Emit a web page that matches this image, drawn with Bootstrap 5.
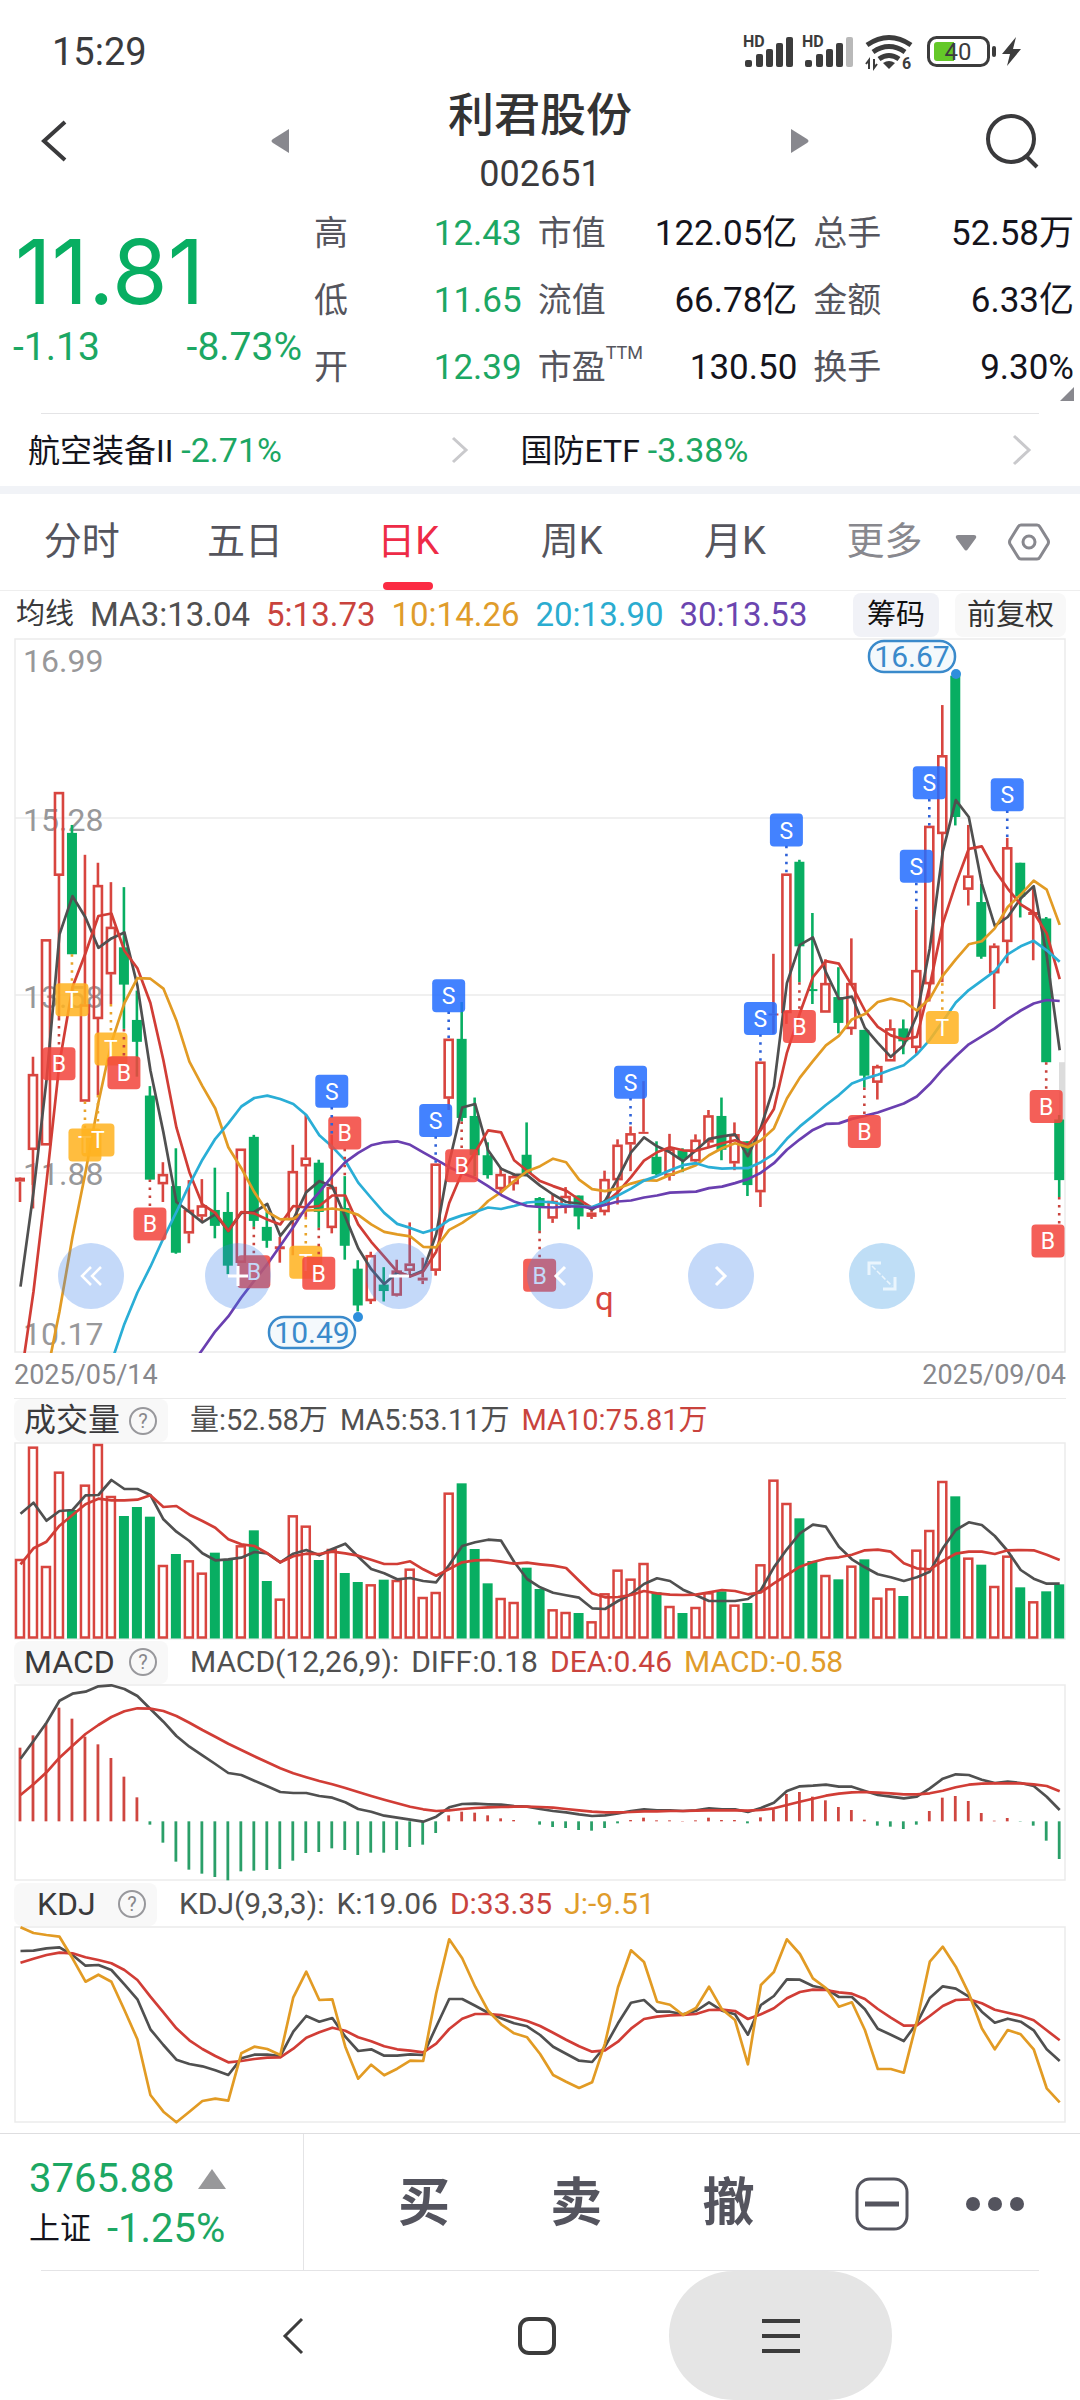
<!DOCTYPE html>
<html lang="zh-CN">
<head>
<meta charset="utf-8">
<meta name="viewport" content="width=device-width, initial-scale=1">
<title>利君股份 002651</title>
<link href="https://cdn.jsdelivr.net/npm/bootstrap@5.3.0/dist/css/bootstrap.min.css" rel="stylesheet">
<style>
:root{--up:#d8453f;--down:#08ae62;--ink:#14141c;--soft:#55555d;--rule:#e4e4e6}
body{font-family:Roboto,"Noto Sans CJK SC",sans-serif;color:#3a3a3c;background:#fff;line-height:1.25}
button{font-family:inherit;color:inherit;border:0;background:none;padding:0}
svg{display:block}
a{text-decoration:none;color:inherit}
.down-text{color:#1ca763}
.status-bar{padding:32px 57px 12px 52px;height:84px;font-size:38px;line-height:40px}
.title-bar{height:110px;padding:4px 40px 0}
.head-btn{width:56px}
.stock-name{font-size:46px;line-height:54px;font-weight:500;color:#333}
.stock-code{font-size:36px;line-height:40px;margin-top:12px}
.step-gap{gap:157px}
.quote-grid{display:grid;grid-template-columns:298px 208fr 260fr 261fr;column-gap:16px;padding:6px 6px 0 0;height:219px}
.price-now{font-family:Inter,Roboto,sans-serif;font-size:90px;line-height:96px;padding:24px 0 0 15px;color:var(--down)}
.price-move{font-size:39px;line-height:54px;padding-left:13px;margin-right:-4px}
.stat-line{height:67px;font-size:35px;color:var(--ink)}
.stat-line span{font-size:34px;color:var(--soft)}
.stat-line sup{font-size:18px;top:-20px}
.corner-mark{right:6px;bottom:12px}
.rule-in{height:1px;background:var(--rule);margin:0 41px}
.sector-row{height:72px;font-size:32px;color:var(--ink)}
.sector-row .down-text{font-size:34px}
.sector-item{width:52%;padding-right:48px}
.sector-item:first-child{width:48%;padding-left:28px;margin-right:4px}
.band{height:8px;background:#f1f3f7}
.period-tabs{display:grid;grid-template-columns:repeat(5,minmax(0,163fr)) minmax(0,263fr);height:97px;font-size:38px;color:var(--soft);border-bottom:1px solid #eee}
.tab-item{position:relative;height:96px}
.tab-more{height:96px;color:#88888e;padding:0 30px}
.tab-item.is-on{color:#ee2b47}
.tab-item.is-on::after{content:"";position:absolute;left:calc(50% - 25px);bottom:0;width:50px;height:8px;border-radius:4px;background:#fb2b43}
.ma-row{height:47px;padding:0 14px 0 16px;font-size:33px;gap:16px;color:#505050}
.ma-row .zh{font-size:29px;color:#3a3a3c}
.chip-btn{font-size:29px;line-height:44px;height:44px;padding:0 12px;border-radius:8px;background:#f8f8f8;color:#333}
.chip-btn.is-on{background:#f1f2f7;color:#111;padding:0 14px}
.plots{padding:0 14px}
.plots svg.plot{width:100%;height:auto}
.date-row{height:44px;font-size:27px;color:#88888c}
.ind-row{height:44px;font-size:30px;gap:12px;color:#505050}
.ind-row.is-vol{font-size:29px}
.ind-btn{width:154px;height:43px;font-size:32px;line-height:43px;padding:0 11px 0 10px;border-radius:8px;background:#f8f8f8;color:#3a3a3c;margin-right:10px}
.ind-btn.is-kdj{width:143px;padding-left:23px}
.top-rule{border-top:1px solid #eaeaea}
.c-red{color:#c9433d}.c-amber{color:#e09c2b}.c-cyan{color:#2bacd0}.c-violet{color:#6b45b0}
.pads{left:44px;top:605px}
.pad-btn{width:66px;height:66px;border-radius:50%;background:rgba(60,130,235,.3);margin-right:95px}
.pad-btn:first-child{margin-right:81px}
.pad-btn.is-full{background:rgba(42,145,225,.3)}
.trade-bar{margin-top:9px;border-top:1px solid #dedee0;height:137px}
.index-box{width:304px;border-right:1px solid #e4e4e6;padding:20px 0 0 29px;height:136px}
.index-box .big{font-size:40px;line-height:50px}
.index-box .zh{font-size:31px;color:var(--ink)}
.trade-act{font-size:52px;font-weight:700;line-height:60px;color:#54545e}
.trade-acts{padding:4px 55px 0 94px}
.trade-acts .gap-a{margin-left:44px}
.sys-nav{height:129px}
.sys-btn{width:223px;height:129px}
.sys-btn.is-on{background:#e5e5e5;border-radius:66px}
.sys-wrap{padding:0 188px 0 181px}
</style>
</head>
<body>
<div class="status-bar d-flex justify-content-between align-items-center">
  <span>15:29</span>
  <svg width="280" height="42" viewBox="743 32 280 42" fill="#3c3c3c" aria-label="信号与电量">
    <g font-family="Roboto" font-weight="700" font-size="16"><text x="743" y="48">HD</text><text x="802" y="48">HD</text></g>
    <g><rect x="745" y="61" width="7" height="7" rx="2"/><rect x="756" y="55" width="7" height="13" rx="2"/><rect x="766" y="50" width="7" height="18" rx="2"/><rect x="776" y="44" width="7" height="24" rx="2"/><rect x="786" y="38" width="7" height="30" rx="2"/></g>
    <g><rect x="805" y="61" width="7" height="7" rx="2"/><rect x="816" y="55" width="7" height="13" rx="2"/><rect x="826" y="50" width="7" height="18" rx="2"/><rect x="836" y="44" width="7" height="24" rx="2"/><rect x="846" y="38" width="7" height="30" rx="2" fill="#b9b9b9"/></g>
    <g fill="none" stroke="#3c3c3c" stroke-width="5"><path d="M867 46q22-15 44 0"/><path d="M873 53q16-11 32 0"/><path d="M879 60q10-7 20 0"/></g>
    <path d="M883 64q6-4 12 0l-6 6z"/>
    <path d="M869 70v-9l-3 4M874 60v9l3-4" fill="none" stroke="#3c3c3c" stroke-width="2"/>
    <text x="902" y="70" font-family="Roboto" font-weight="700" font-size="16">6</text>
    <rect x="928.500" y="38.500" width="60" height="28" rx="8" fill="none" stroke="#3c3c3c" stroke-width="3"/>
    <path d="M937 43h17v19h-17q-3 0-3-3v-13q0-3 3-3z" fill="#64c828"/><rect x="992" y="47" width="4" height="11" rx="2"/>
    <text x="958" y="61" font-family="Roboto" font-size="24" text-anchor="middle">40</text>
    <path d="M1016 38l-14 17h8l-3 12 14-17h-8z"/>
  </svg>
</div>

<header class="title-bar d-flex justify-content-between align-items-center">
  <button class="head-btn" aria-label="返回"><svg width="28" height="44" viewBox="0 0 28 44" fill="none" stroke="#3a3a3c" stroke-width="4"><path d="M25 3L4 22l21 19"/></svg></button>
  <div class="d-flex align-items-center step-gap">
    <button aria-label="上一只"><svg width="20" height="26" viewBox="0 0 20 26"><path d="M18 1v24L2 15q-3-2 0-4z" fill="#88888e"/></svg></button>
    <div class="text-center"><div class="stock-name">利君股份</div><div class="stock-code">002651</div></div>
    <button aria-label="下一只"><svg width="20" height="26" viewBox="0 0 20 26"><path d="M2 1v24l16-10q3-2 0-4z" fill="#88888e"/></svg></button>
  </div>
  <button class="head-btn" aria-label="搜索"><svg width="56" height="56" viewBox="0 0 56 56" fill="none" stroke="#3a3a3c" stroke-width="4"><circle cx="27" cy="26" r="23"/><path d="M42 43l11 11"/></svg></button>
</header>

<section class="quote-grid position-relative">
  <div>
    <div class="price-now">11.81</div>
    <div class="price-move down-text d-flex justify-content-between"><span>-1.13</span><span>-8.73%</span></div>
  </div>
  <div>
    <div class="stat-line d-flex justify-content-between align-items-center"><span>高</span><b class="fw-normal down-text">12.43</b></div>
    <div class="stat-line d-flex justify-content-between align-items-center"><span>低</span><b class="fw-normal down-text">11.65</b></div>
    <div class="stat-line d-flex justify-content-between align-items-center"><span>开</span><b class="fw-normal down-text">12.39</b></div>
  </div>
  <div>
    <div class="stat-line d-flex justify-content-between align-items-center"><span>市值</span><b class="fw-normal">122.05亿</b></div>
    <div class="stat-line d-flex justify-content-between align-items-center"><span>流值</span><b class="fw-normal">66.78亿</b></div>
    <div class="stat-line d-flex justify-content-between align-items-center"><span>市盈<sup>TTM</sup></span><b class="fw-normal">130.50</b></div>
  </div>
  <div>
    <div class="stat-line d-flex justify-content-between align-items-center"><span>总手</span><b class="fw-normal">52.58万</b></div>
    <div class="stat-line d-flex justify-content-between align-items-center"><span>金额</span><b class="fw-normal">6.33亿</b></div>
    <div class="stat-line d-flex justify-content-between align-items-center"><span>换手</span><b class="fw-normal">9.30%</b></div>
  </div>
  <svg class="corner-mark position-absolute" width="14" height="14" viewBox="0 0 14 14"><path d="M14 0v14H0z" fill="#88888e"/></svg>
</section>
<div class="rule-in"></div>
<div class="sector-row d-flex align-items-center">
  <a href="#" class="sector-item d-flex justify-content-between align-items-center"><span>航空装备II <span class="down-text">-2.71%</span></span><svg width="18" height="28" viewBox="0 0 18 28" fill="none" stroke="#c9c9cc" stroke-width="3"><path d="M2 2l13 12L2 26"/></svg></a>
  <a href="#" class="sector-item d-flex justify-content-between align-items-center"><span>国防ETF <span class="down-text">-3.38%</span></span><svg width="20" height="32" viewBox="0 0 20 32" fill="none" stroke="#c9c9cc" stroke-width="3"><path d="M2 2l15 14L2 30"/></svg></a>
</div>
<div class="band"></div>

<nav class="period-tabs">
  <button class="tab-item">分时</button><button class="tab-item">五日</button><button class="tab-item is-on">日K</button><button class="tab-item">周K</button><button class="tab-item">月K</button>
  <div class="tab-more d-flex align-items-center justify-content-between">
    <button class="d-flex align-items-center gap-4">更多 <svg class="ms-2" width="22" height="17" viewBox="0 0 22 17"><path d="M3 1h16q3 0 2 3l-8 11q-2 3-4 0L1 4q-1-3 2-3z" fill="#88888e"/></svg></button>
    <button aria-label="设置"><svg width="42" height="40" viewBox="0 0 42 40" fill="none" stroke="#88888e" stroke-width="3"><path d="M13 3h16q2 0 3 2l8 13q1 2 0 4l-8 13q-1 2-3 2H13q-2 0-3-2L2 22q-1-2 0-4l8-13q1-2 3-2z"/><circle cx="21" cy="20" r="6"/></svg></button>
  </div>
</nav>

<div class="ma-row d-flex align-items-center">
  <span class="zh">均线</span><span>MA3:13.04</span><span class="c-red">5:13.73</span><span class="c-amber">10:14.26</span><span class="c-cyan">20:13.90</span><span class="c-violet">30:13.53</span>
  <button class="chip-btn is-on ms-auto">筹码</button><button class="chip-btn">前复权</button>
</div>

<main class="plots">
  <div class="position-relative">
    <svg class="plot" id="kline" viewBox="14 638 1052 716" role="img" aria-label="日K线图"></svg>
    <div class="pads position-absolute d-flex">
      <button class="pad-btn d-flex align-items-center justify-content-center" aria-label="最早"><svg width="24" height="24" viewBox="0 0 24 24" fill="none" stroke="#fff" stroke-width="2.500"><path d="M12 3L3 12l9 9M22 3l-9 9 9 9"/></svg></button>
      <button class="pad-btn d-flex align-items-center justify-content-center" aria-label="放大"><svg width="24" height="24" viewBox="0 0 24 24" stroke="#fff" stroke-width="3"><path d="M2 12h20M12 2v20"/></svg></button>
      <button class="pad-btn d-flex align-items-center justify-content-center" aria-label="缩小"><svg width="24" height="24" viewBox="0 0 24 24" stroke="#fff" stroke-width="3"><path d="M2 12h20"/></svg></button>
      <button class="pad-btn d-flex align-items-center justify-content-center" aria-label="左移"><svg width="24" height="24" viewBox="0 0 24 24" fill="none" stroke="#fff" stroke-width="3"><path d="M17 3l-9 9 9 9"/></svg></button>
      <button class="pad-btn d-flex align-items-center justify-content-center" aria-label="右移"><svg width="24" height="24" viewBox="0 0 24 24" fill="none" stroke="#fff" stroke-width="3"><path d="M7 3l9 9-9 9"/></svg></button>
      <button class="pad-btn is-full d-flex align-items-center justify-content-center me-0" aria-label="全屏"><svg width="32" height="32" viewBox="0 0 32 32" fill="none" stroke="#eaf5fd" stroke-width="3"><path d="M3 15V3h12M17 29h12V17"/><path d="M6 6l20 20" stroke-width="1.500" stroke-dasharray="5 2"/></svg></button>
    </div>
  </div>
  <div class="date-row d-flex justify-content-between align-items-center"><span>2025/05/14</span><span>2025/09/04</span></div>
  <div class="ind-row is-vol top-rule d-flex align-items-center">
    <button class="ind-btn d-flex align-items-center justify-content-between">成交量 <svg width="28" height="28" viewBox="0 0 28 28"><circle cx="14" cy="14" r="13" fill="none" stroke="#98989c" stroke-width="2"/><text x="14" y="21" font-size="20" text-anchor="middle" fill="#88888c">?</text></svg></button>
    <span>量:52.58万</span><span>MA5:53.11万</span><span class="c-red">MA10:75.81万</span>
  </div>
  <svg class="plot" id="vol" viewBox="14 1442 1052 198" role="img" aria-label="成交量图"></svg>
  <div class="ind-row d-flex align-items-center">
    <button class="ind-btn d-flex align-items-center justify-content-between">MACD <svg width="28" height="28" viewBox="0 0 28 28"><circle cx="14" cy="14" r="13" fill="none" stroke="#98989c" stroke-width="2"/><text x="14" y="21" font-size="20" text-anchor="middle" fill="#88888c">?</text></svg></button>
    <span>MACD(12,26,9):</span><span>DIFF:0.18</span><span class="c-red">DEA:0.46</span><span class="c-amber">MACD:-0.58</span>
  </div>
  <svg class="plot" id="macd" viewBox="14 1684 1052 198" role="img" aria-label="MACD图"></svg>
  <div class="ind-row d-flex align-items-center">
    <button class="ind-btn is-kdj d-flex align-items-center justify-content-between">KDJ <svg width="28" height="28" viewBox="0 0 28 28"><circle cx="14" cy="14" r="13" fill="none" stroke="#98989c" stroke-width="2"/><text x="14" y="21" font-size="20" text-anchor="middle" fill="#88888c">?</text></svg></button>
    <span>KDJ(9,3,3):</span><span>K:19.06</span><span class="c-red">D:33.35</span><span class="c-amber">J:-9.51</span>
  </div>
  <svg class="plot" id="kdj" viewBox="14 1926 1052 198" role="img" aria-label="KDJ图"></svg>
</main>

<footer>
  <div class="trade-bar d-flex">
    <a href="#" class="index-box down-text flex-shrink-0">
      <div class="big d-flex align-items-center gap-4">3765.88<svg width="28" height="20" viewBox="0 0 28 20"><path d="M14 0l14 20H0z" fill="#98989a"/></svg></div>
      <div class="big d-flex align-items-center gap-3"><span class="zh">上证</span>-1.25%</div>
    </a>
    <div class="trade-acts flex-grow-1 d-flex justify-content-between align-items-center">
      <button class="trade-act">买</button><button class="trade-act gap-a">卖</button><button class="trade-act gap-a">撤</button>
      <button class="gap-a" aria-label="持仓"><svg width="54" height="54" viewBox="0 0 54 54" fill="none" stroke="#54545e"><rect x="2" y="2" width="50" height="50" rx="13" stroke-width="3"/><path d="M10 27h34" stroke-width="5"/></svg></button>
      <button aria-label="更多"><svg width="60" height="16" viewBox="0 0 60 16" fill="#54545e"><circle cx="8" cy="8" r="7"/><circle cx="30" cy="8" r="7"/><circle cx="52" cy="8" r="7"/></svg></button>
    </div>
  </div>
  <div class="rule-in"></div>
  <nav class="sys-nav sys-wrap d-flex justify-content-between">
    <button class="sys-btn d-flex align-items-center justify-content-center" aria-label="后退"><svg width="22" height="38" viewBox="0 0 22 38" fill="none" stroke="#3c3c3c" stroke-width="3"><path d="M20 2L3 19l17 17"/></svg></button>
    <button class="sys-btn d-flex align-items-center justify-content-center" aria-label="主屏"><svg width="38" height="38" viewBox="0 0 38 38" fill="none" stroke="#3c3c3c" stroke-width="4"><rect x="2" y="2" width="34" height="34" rx="9"/></svg></button>
    <button class="sys-btn is-on d-flex align-items-center justify-content-center" aria-label="任务"><svg width="38" height="36" viewBox="0 0 38 36" stroke="#3c3c3c" stroke-width="4"><path d="M0 3h38M0 18h38M0 33h38"/></svg></button>
  </nav>
</footer>

<script src="https://cdn.jsdelivr.net/npm/bootstrap@5.3.0/dist/js/bootstrap.bundle.min.js"></script>
<script>
const UP = '#d8453f', DOWN = '#08ae62', DARK = '#505050', RED = '#d13d36', AMBER = '#e29b24', CYAN = '#2aaed6', VIOLET = '#6a3fb0';
const X = i => 20 + 12.99 * i;
const level = v => 620 + v / 2.0103;
const rect = (x, y, w, h, more) => `<rect x="${x}" y="${y}" width="${w}" height="${h}" ${more}/>`;
const line = (x1, y1, x2, y2, more) => `<line x1="${x1}" y1="${y1}" x2="${x2}" y2="${y2}" ${more}/>`;
const curve = (data, color, fy, from = 0) =>
  `<polyline points="${data.map((v, i) => (X(i + from) + .5).toFixed(1) + ',' + fy(v).toFixed(1)).join(' ')}" fill="none" stroke="${color}" stroke-width="2.700" stroke-linejoin="round"/>`;
const frame = (y1, y2) => rect(15, y1, 1050, y2 - y1, 'fill="none" stroke="#ebebeb" stroke-width="1.500"');

// colour, high, body top, body bottom, low
const candles = `R1120,1121,1129,1170 R878,913,1065,1183 R642,642,1056,1056 R346,346,514,800 G412,428,672,672 R472,773,968,968 R488,533,802,955 R527,617,712,772 G537,658,733,822 G745,804,848,918
G937,956,1125,1125 R1090,1114,1134,1170 G1062,1138,1272,1274 R1126,1186,1233,1253 R1124,1177,1199,1210 G1101,1186,1218,1243 G1150,1190,1298,1315 R1063,1063,1292,1292 G1035,1039,1208,1220 G1190,1220,1248,1262
R1240,1259,1265,1292 R1055,1108,1206,1277 R995,1081,1098,1200 G1085,1091,1190,1222 R1035,1140,1222,1233 G1118,1182,1258,1286 G1287,1304,1378,1390 R1270,1277,1369,1375 G1301,1336,1349,1370 R1286,1308,1358,1360
R1211,1294,1308,1320 R1282,1322,1328,1335 R1093,1093,1308,1318 R842,842,962,985 G768,842,1001,1008 G960,997,1076,1118 G1050,1076,1116,1123 R1100,1114,1144,1155 R1112,1118,1134,1147 G1010,1075,1113,1118
G1160,1162,1178,1228 R1155,1168,1203,1212 R1140,1158,1181,1193 G1157,1157,1199,1225 R1180,1191,1200,1204 R1107,1124,1190,1197 R1044,1055,1126,1175 R1018,1032,1054,1108 R927,1029,1032,1032 G1048,1079,1114,1116
R1033,1063,1117,1127 G1062,1066,1083,1110 R1034,1045,1088,1095 R985,996,1050,1060 G960,997,1065,1086 R1010,1034,1092,1106 G1048,1048,1136,1158 R888,888,1150,1180 R671,791,795,832 R510,510,790,812
G482,486,656,728 G589,742,745,772 R682,730,789,789 G698,758,810,831 R640,730,822,834 G824,824,916,940 R894,897,930,964 R803,821,887,887 G803,821,847,873 R583,704,860,872
R414,414,732,767 R171,272,430,728 G110,112,396,413 R412,514,542,574 G530,567,677,681 R650,655,710,782 R438,457,647,690 G488,488,556,598 R535,587,593,684 G597,600,889,889 G995,1004,1126,1160`.split(/\s+/);

// day index, letter, box top, start and end of the dotted lead
const marks = [[5,'T',1022,968,1022],[6,'T',1012,955,1012],[4,'T',730,672,730],[7,'T',829,772,829],[22,'T',1258,1200,1258],[71,'T',786,730,786],
[3,'B',859,800,859],[8,'B',877,822,877],[10,'B',1181,1125,1181],[18,'B',1277,1220,1277],[23,'B',1280,1222,1280],[25,'B',998,1063,1118],[34,'B',1064,1008,1064],[40,'B',1284,1228,1284],[60,'B',784,728,784],[65,'B',995,940,995],[79,'B',945,889,945],[80,'B',1215,1160,1215],
[24,'S',914,979,1035],[32,'S',973,1038,1093],[33,'S',722,787,842],[47,'S',896,961,1018],[57,'S',768,833,888],[59,'S',389,454,510],[69,'S',462,528,583],[70,'S',294,360,414],[76,'S',318,383,438]];
const ma3 = [1340,1150,925,632,555,598,659,640,628,735,905,1030,1170,1190,1211,1195,1228,1192,1190,1174,1238,1205,1150,1128,1139,1200,1263,1305,1335,1312,1319,1308,1235,1090,980,973,1066,1103,1115,1116,1137,1155,1170,1173,1185,1168,1122,1070,1040,1058,1070,1088,1066,1043,1038,1034,1078,1020,938,730,653,638,708,762,757,820,850,878,855,795,660,465,362,396,530,615,597,560,535,675,865];
const ma5 = [1530,1350,1130,890,738,670,595,590,665,700,770,885,1020,1110,1175,1192,1228,1190,1193,1205,1215,1178,1181,1178,1157,1157,1215,1250,1280,1310,1320,1310,1270,1172,1110,1070,1026,1030,1086,1107,1128,1138,1147,1165,1182,1172,1150,1120,1087,1070,1060,1066,1067,1060,1052,1046,1055,1025,983,870,790,718,686,691,735,785,818,835,843,838,735,610,530,460,455,503,540,572,588,630,722];
const ma10 = [1520,1390,1240,1110,970,850,770,720,721,741,805,888,937,982,1060,1102,1150,1190,1205,1204,1187,1186,1183,1187,1196,1215,1230,1235,1239,1260,1261,1226,1212,1194,1168,1150,1128,1108,1098,1083,1090,1125,1144,1148,1143,1133,1126,1127,1116,1106,1096,1076,1062,1052,1060,1046,1022,962,920,887,855,836,803,792,768,761,767,785,761,715,682,652,646,620,577,552,524,542,613];
const ma20 = [1492,1415,1352,1300,1243,1190,1135,1085,1043,1012,978,961,956,963,973,995,1036,1059,1087,1131,1162,1192,1214,1222,1232,1224,1206,1197,1190,1181,1184,1178,1171,1169,1171,1176,1178,1180,1170,1157,1143,1127,1118,1106,1096,1092,1100,1103,1102,1102,1090,1073,1043,1018,997,975,955,932,922,914,904,895,873,844,807,769,744,725,706,672,656,645,664,687];
const ma30 = [1503,1467,1430,1400,1362,1328,1295,1258,1220,1180,1150,1118,1090,1071,1056,1050,1048,1055,1070,1085,1100,1112,1122,1138,1156,1169,1178,1180,1181,1179,1179,1182,1176,1169,1167,1161,1157,1151,1150,1149,1142,1139,1132,1124,1111,1092,1065,1044,1025,1013,1012,1003,997,990,981,972,958,933,903,877,853,837,821,802,785,771,764,766];

(function drawKline() {
  let s = '<defs><clipPath id="kclip"><rect x="14" y="638" width="1052" height="715"/></clipPath></defs>' + frame(639, 1352);
  [818, 995, 1173].forEach(y => s += line(15, y, 1065, y, 'stroke="#ebebeb" stroke-width="1.500"'));
  [['16.99', 672], ['15.28', 831], ['13.58', 1008], ['11.88', 1185], ['10.17', 1345]].forEach(t => s += `<text x="23" y="${t[1]}" font-size="32" fill="#98989a">${t[0]}</text>`);
  s += rect(1059, level(889), 6, 57, 'fill="#dcdcdc"');
  candles.forEach((c, i) => {
    const up = c[0] === 'R', [h, t, b, l] = c.slice(1).split(',').map(v => level(+v)), x = X(i), col = up ? UP : DOWN;
    const wick = `stroke="${col}" stroke-width="2.600"`;
    if (up) {
      s += line(x, h, x, t, wick) + line(x, b, x, l, wick);
      s += b - t < 5 ? rect(x - 5, t, 10, Math.max(b - t, 2), `fill="${col}"`) : rect(x - 4, t + 1, 8, b - t - 2, `fill="none" ${wick}`);
    } else s += line(x, h, x, l, wick) + rect(x - 5, t, 10, Math.max(b - t, 2), `fill="${col}"`);
  });
  s += '<g clip-path="url(#kclip)">' + curve(ma3, DARK, level) + curve(ma5, RED, level) + curve(ma10, AMBER, level, 2) + curve(ma20, CYAN, level, 7) + curve(ma30, VIOLET, level, 13) + '</g>';
  const tone = { B: ['#f2453d', '#c9433d'], S: ['#246eff', '#2f62d8'], T: ['#ffb21f', '#e9a42b'] };
  marks.forEach(([i, k, top, a, b]) => {
    const x = Math.min(X(i), 1048), y = level(top);
    s += line(X(i), level(a), X(i), level(b), `stroke="${tone[k][1]}" stroke-width="2.600" stroke-dasharray="2.500 5.500"`);
    s += rect(x - 16.5, y, 33, 33, `rx="4" fill="${tone[k][0]}" fill-opacity=".86"`);
    s += `<text x="${x}" y="${y + 25}" font-size="23" fill="#fff" text-anchor="middle">${k}</text>`;
  });
  [[868, 641, '16.67', 956, 674], [268, 1317, '10.49', 358, 1317]].forEach(([x, y, t, cx, cy]) => {
    s += rect(x + 1, y, 86, 31, 'rx="15" fill="#f4f9fc" stroke="#3a8acb" stroke-width="2.500"') + `<text x="${x + 44}" y="${y + 26}" font-size="30" fill="#3a8acb" text-anchor="middle">${t}</text><circle cx="${cx}" cy="${cy}" r="5" fill="#2f8fdc"/>`;
  });
  s += '<text x="595" y="1310" font-size="33" fill="#d8453f">q</text>';
  kline.innerHTML = s;
})();

const vols = 'R537 R200 R558 R275 G390 R314 R192 R348 G408 G381 G410 R555 G522 R541 R578 G518 G540 R496 G451 G603 R656 R406 R437 G540 R507 G579 G606 R613 G599 R600 R566 R651 R636 R338 G310 G507 G610 R654 R666 G563 G627 R688 R696 G699 R724 R640 R569 R596 R549 G637 R678 G699 R681 R637 G634 R674 G669 R553 R299 R369 G415 G543 R585 G598 R557 G538 R653 R625 G648 R509 R450 R303 G349 R533 G554 R618 R527 G622 R664 G634 G613'.split(' ');
const vma5 = [401,368,422,393,390,346,345,300,327,327,345,418,455,483,520,541,538,533,516,520,547,521,510,526,507,491,530,567,580,598,594,603,607,555,498,487,479,482,545,597,622,638,646,653,685,687,663,642,612,595,603,629,646,663,663,663,657,630,562,508,460,434,440,500,538,562,583,592,603,592,575,505,450,427,435,468,513,570,596,611,611];
const vma10 = [553,505,485,437,405,373,356,361,361,359,346,381,378,404,423,443,478,493,498,520,547,529,521,522,515,520,527,539,552,552,544,568,587,567,547,541,540,545,551,548,553,557,564,602,640,652,651,645,633,640,644,645,644,637,630,633,643,637,610,585,560,546,536,532,524,511,509,515,550,565,568,543,521,515,515,522,511,510,511,524,540];
(function drawVolume() {
  const fy = v => 1380 + v / 3;
  let s = frame(1443, 1639);
  vols.forEach((v, i) => {
    const y = fy(+v.slice(1)), h = 1638.5 - y;
    s += v[0] === 'R' ? rect(X(i) - 4, y + 1, 8, h - 2, `fill="none" stroke="${UP}" stroke-width="2.500"`) : rect(X(i) - 5, y, 10, h, `fill="${DOWN}"`);
  });
  vol.innerHTML = s + curve(vma5, DARK, fy) + curve(vma10, RED, fy);
})();

const bars = [353,316,280,233,266,320,343,384,440,502,584,638,695,719,731,741,751,724,722,720,717,692,669,666,655,660,675,668,668,660,651,644,609,556,545,548,556,565,570,574,584,591,594,600,602,594,580,570,563,571,571,573,571,563,570,570,580,562,538,492,486,500,511,531,540,569,587,590,597,584,543,503,498,513,549,572,564,575,587,632,687];
const diff = [386,333,278,212,191,185,169,166,177,198,237,275,318,350,376,402,429,435,452,469,486,489,489,498,503,517,537,545,557,563,569,575,560,532,522,521,523,524,528,530,537,543,547,553,558,556,550,543,538,541,541,543,541,535,538,538,546,534,518,483,469,467,464,470,470,483,495,500,505,500,475,446,433,435,449,459,455,459,468,500,540];
const dea = [495,463,427,383,347,312,285,261,244,235,236,243,258,278,300,320,341,360,379,397,415,430,442,453,463,474,486,498,509,520,530,538,543,541,537,534,532,531,530,530,531,533,537,541,545,547,547,546,544,544,543,543,542,541,541,541,542,540,535,525,515,506,497,491,487,486,488,490,493,493,490,482,472,464,461,460,460,460,463,468,484];
const low3 = v => 1630 + v / 3;
macd.innerHTML = frame(1685, 1880) + bars.map((v, i) => line(X(i), low3(574), X(i), low3(v), `stroke="${v < 574 ? '#cf4640' : '#2a9f68'}" stroke-width="2.800"`)).join('') + curve(diff, DARK, low3) + curve(dea, RED, low3);

const kj = [892,909,915,920,985,1055,1034,1055,1140,1228,1395,1445,1477,1445,1413,1406,1412,1270,1250,1257,1275,1102,1025,1110,1108,1250,1346,1304,1336,1316,1292,1293,1090,928,985,1070,1142,1183,1210,1222,1272,1335,1355,1374,1357,1240,1072,961,996,1115,1124,1155,1134,1070,1138,1170,1303,1065,1026,928,972,1045,1074,1130,1117,1200,1317,1317,1328,1175,995,950,1010,1090,1195,1258,1200,1213,1258,1375,1417];
const kk = [963,962,955,952,975,1007,1005,1020,1063,1108,1198,1245,1289,1302,1309,1321,1335,1285,1274,1274,1278,1205,1158,1175,1164,1220,1263,1258,1277,1277,1273,1275,1190,1107,1107,1127,1148,1165,1180,1189,1215,1250,1271,1292,1296,1250,1180,1118,1110,1145,1145,1153,1143,1117,1142,1153,1214,1125,1098,1048,1049,1068,1076,1101,1101,1138,1196,1214,1233,1180,1104,1069,1076,1100,1145,1178,1166,1175,1201,1258,1293];
const kd = [998,986,975,968,970,982,990,1000,1020,1050,1100,1147,1195,1231,1257,1278,1297,1293,1287,1283,1282,1256,1223,1207,1193,1202,1222,1234,1249,1258,1262,1267,1241,1197,1166,1152,1152,1155,1163,1173,1188,1208,1229,1249,1265,1261,1235,1196,1167,1160,1156,1155,1152,1140,1139,1143,1167,1153,1135,1105,1086,1079,1080,1087,1091,1107,1137,1163,1187,1186,1158,1128,1110,1108,1120,1139,1148,1157,1171,1201,1231];
kdj.innerHTML = frame(1927, 2122) + curve(kk, DARK, low3) + curve(kd, RED, low3) + curve(kj, AMBER, low3);
</script>
</body>
</html>
